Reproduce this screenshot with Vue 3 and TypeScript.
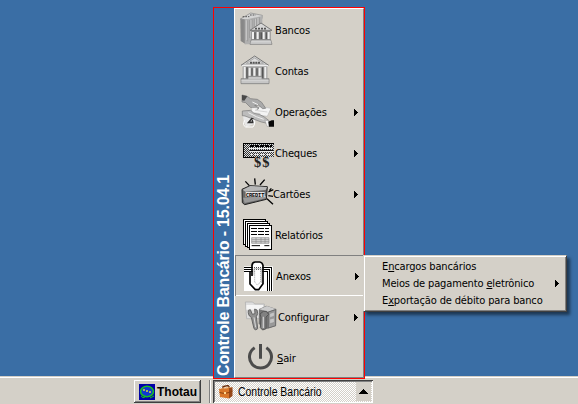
<script setup lang="ts">
interface MenuItem {
  id: string
  label: string
  key?: string
  rest?: string
  arrow?: boolean
  box: string
}

const items: MenuItem[] = [
  { id: 'bancos', label: 'Bancos', box: '102 27 102 123' },
  { id: 'contas', label: 'Contas', box: '102 150 102 123' },
  { id: 'operacoes', label: 'Operações', arrow: true, box: '102 9 102 123' },
  { id: 'cheques', label: 'Cheques', arrow: true, box: '102 132 102 123' },
  { id: 'cartoes', label: 'Cartões', arrow: true, box: '102 9 102 123' },
  { id: 'relatorios', label: 'Relatórios', box: '102 132 102 123' },
  { id: 'anexos', label: 'Anexos', arrow: true, box: '102 15 102 123' },
  { id: 'configurar', label: 'Confi', key: 'g', rest: 'urar', arrow: true, box: '102 138 102 123' },
  { id: 'sair', label: '', key: 'S', rest: 'air', box: '102 36 102 123' },
]

const subItems = [
  { id: 'encargos', label: 'E', key: 'n', rest: 'cargos bancários', arrow: false },
  { id: 'meios', label: 'Meios de pagamento ', key: 'e', rest: 'letrônico', arrow: true },
  { id: 'exportacao', label: 'E', key: 'x', rest: 'portação de débito para banco', arrow: false },
]
</script>

<template>
  <div class="desktop">
    <div class="taskbar">
      <button class="task raised">
        <svg class="task-icon" width="16" height="16" viewBox="0 0 16 16">
          <rect width="16" height="16" fill="#0000a8" />
          <ellipse cx="8" cy="7.5" rx="6.4" ry="5.2" fill="#1038d0" stroke="#18c020" stroke-width="1.6" />
          <path d="M4 6h2M7 7h2M10 8h2" stroke="#d8d840" stroke-width="1.3" />
          <path d="M2 12q2 3 4 1M11 14l4-2" stroke="#18c020" fill="none" />
        </svg>
        <span class="task-label bold">Thotau</span>
      </button>
      <i class="divider"></i>
      <button class="task pressed">
        <svg class="task-icon" width="14" height="14" viewBox="0 0 14 14">
          <path d="M4 4V1.5L9 .5l1 1V4" fill="none" stroke="#6b2c08" stroke-width="1.3" />
          <path d="M0 4l10-1v10.5L1 12z" fill="#d9772a" />
          <path d="M10 3l3.5-1v9L10 13.500z" fill="#97481a" />
          <path d="M0 4l10-1 3.500-1-9 .8z" fill="#f0a050" />
          <path d="M.5 7.500q5 2 9.500 0l3.500-1.500" fill="none" stroke="#8d430f" />
          <path d="M5 7h2v2H5z" fill="#ffd890" />
        </svg>
        <span class="task-label narrow">Controle Bancário</span>
        <span class="up"><svg width="9" height="5" viewBox="0 0 9 5" shape-rendering="crispEdges"><path d="M4 0h1v1h1v1h1v1h1v1h1v1H0V4h1V3h1V2h1V1h1z" /></svg></span>
      </button>
    </div>

    <div class="popup">
      <div class="brand"><span class="brand-text">Controle Bancário - 15.04.1</span></div>
      <div class="menu">
        <div v-for="item in items" :key="item.id" class="item" :class="item.id">
          <svg class="icon" width="34" height="41" :viewBox="item.box">
            <template v-if="item.id === 'bancos'">
              <path d="M106 57L123 51V133L107 123z" fill="#858585" />
              <path d="M106 57L137 39 172 46 171 56 123 60z" fill="#d4d4d4" stroke="#858585" stroke-width="2" />
              <path d="M119 59L172 48V133H119z" fill="#b0b0b0" />
              <path d="M111 58V123M116 57V127M128 61V124M134 60V114M141 58V110M148 56V94M155 55V88M163 52V83" stroke="#8e8e8e" stroke-width="2" />
              <path d="M125 61V120M138 60V110M151 57V90M159 54V85" stroke="#d6d6d6" stroke-width="2" />
              <path d="M113 50h20M135 45h17" stroke="#555" stroke-width="3" stroke-dasharray="5 3" />
              <path d="M139 93h58v28h-58z" fill="#8d8d8d" />
              <path d="M135 91L168 69 201 91z" fill="#d7d7d7" stroke="#777" stroke-width="3" />
              <path d="M150 86h35" stroke="#555" stroke-width="5" stroke-dasharray="6 3" />
              <path d="M144 96v22M158 96v22M176 96v22M191 96v22" stroke="#f0f0f0" stroke-width="6" />
              <path d="M150 97v20M165 97v20M170 97v20M184 97v20" stroke="#4e4e4e" stroke-width="3" />
              <path d="M139 119h58l4 14h-66z" fill="#bcbcbc" stroke="#777" stroke-width="2" />
              <path d="M138 124h60M136 129h63" stroke="#e5e5e5" stroke-width="2" />
            </template>
            <template v-else-if="item.id === 'contas'">
              <path d="M113 198h74v43h-74z" fill="#999" />
              <path d="M108 196L149 168 191 196z" fill="#d4d4d4" stroke="#777" stroke-width="3" />
              <path d="M124 190L149 174 175 190z" fill="#ddd" stroke="#999" stroke-width="2" />
              <path d="M135 188h31" stroke="#555" stroke-width="6" stroke-dasharray="6 2" />
              <path d="M110 197h80" stroke="#ededed" stroke-width="4" />
              <path d="M119 201v38M134 203v26M148 203v26M164 203v26M181 201v38" stroke="#efefef" stroke-width="6" />
              <path d="M126 202v32M141 205v22M156 205v22M173 202v32" stroke="#555" stroke-width="4" />
              <path d="M129 229h42v11h-42z" fill="#b4b4b4" />
              <path d="M108 236h21v-7h42v7h21v15h-84z" fill="#b6b6b6" stroke="#777" stroke-width="2" />
              <path d="M109 241h82M109 246h82M131 234h38" stroke="#e8e8e8" stroke-width="2" />
            </template>
            <template v-else-if="item.id === 'operacoes'">
              <path d="M114 82L150 78 151 106 123 118 116 100z" fill="#e7e7e7" />
              <path d="M144 52L198 61 187 85 136 78z" fill="#f4f4f4" stroke="#bbb" stroke-width="2" />
              <path d="M150 67l37 5M146 74l20 3" stroke="#c6c6c6" stroke-width="2" />
              <path d="M111 21L125 24 137 32 157 34 170 43 182 61 173 62 160 51 149 53 162 59 159 64 136 58 122 44 111 42z" fill="#aaa" stroke="#777" stroke-width="2" />
              <path d="M111 21l16 4-9 13-7-1z" fill="#484848" />
              <path d="M112 69L137 67 147 76 163 79 178 87 192 98 188 106 169 102 153 96 136 90 120 84 112 83z" fill="#bcbcbc" stroke="#777" stroke-width="2" />
              <path d="M130 74l24 12 22 8M140 61l17 1M142 42l17 8" stroke="#eee" stroke-width="3" fill="none" />
              <path d="M142 90L131 103h12M143 90v16" fill="none" stroke="#333" stroke-width="5" />
              <path d="M119 97q-8 14 3 20h22q10-12-1-24" fill="none" stroke="#fff" stroke-width="3" />
              <path d="M180 97l11 1 2 17h-7z" fill="#f7f7f7" stroke="#777" />
              <path d="M190 101l10-4h7v19h-15z" fill="#080808" />
            </template>
            <template v-else-if="item.id === 'cheques'">
              <defs><pattern id="dither" width="6" height="6" patternUnits="userSpaceOnUse"><path d="M0 0h3v3H0zM3 3h3v3H3z" fill="#333" /></pattern></defs>
              <g shape-rendering="crispEdges">
                <rect x="117" y="168" width="90" height="39" fill="#ddd" />
                <rect x="117" y="168" width="90" height="39" fill="url(#dither)" />
                <path d="M207 166.500H115.500V208H150" fill="none" stroke="#000" stroke-width="3" />
                <path d="M135 172.500h66" stroke="#000" stroke-width="6" stroke-dasharray="12 3" />
                <path d="M132 181.500h72M135 190.500h69" stroke="#eee" stroke-width="3" />
                <path d="M135 186h69" stroke="#111" stroke-width="3" />
                <path d="M138 199.500h66" stroke="#eee" stroke-width="3" stroke-dasharray="6 3" />
              </g>
              <text x="147" y="236" class="dollars" textLength="46">$$</text>
            </template>
            <template v-else-if="item.id === 'cartoes'">
              <path d="M111 58L135 47 187 50 184 88 119 104 112 98z" fill="#686868" stroke="#222" stroke-width="3" />
              <path d="M113 59L136 48 186 51 182 60 121 65z" fill="#b8b8b8" />
              <path d="M114 83L183 78 182 85 119 99z" fill="#999" />
              <path d="M122 66h57v15h-57z" fill="#e4e4e4" />
              <text x="123" y="80" class="credit" textLength="55">CREDIT</text>
              <path d="M121 34l12 13M149 25l2 19M179 29l-14 16M190 66l15-7M190 77l14 2M186 86l18 17M193 62l6-7" stroke="#050505" stroke-width="4" fill="none" />
            </template>
            <template v-else-if="item.id === 'relatorios'">
              <g fill="#fff" stroke="#000" stroke-width="3" shape-rendering="crispEdges">
                <path d="M115.500 148.500h66v74h-66z" /><path d="M121.500 154.500h66v74h-66z" />
                <path d="M127.500 160.500h66v73h-66z" /><path d="M133.500 166.500h66v71h-66z" />
                <path d="M139 174h54M139 184h54M139 193h54" stroke-dasharray="18 3" />
              </g>
              <path d="M140 203h52v17h-52zM140 209h52M140 215h52M153 203v17M168 203v17M180 203v17" fill="#d6d6d6" stroke="#888" stroke-width="2" />
              <path d="M140 227h25M178 227h15" stroke="#000" stroke-width="3" />
            </template>
            <template v-else-if="item.id === 'anexos'">
              <path d="M117 49h87v74h-87z" fill="#fff" />
              <g fill="none" stroke="#000" stroke-width="3" shape-rendering="crispEdges">
                <path d="M117 52.500h81.500v70.500M117 58.500h75.500v64.500M117 64.500h69.500v58.500" />
              </g>
              <path d="M141 78V46q1-10 10-10h13q8 1 10 10V101L161 119h-10L135 102V63" fill="#fff" stroke="#000" stroke-width="5" />
              <path d="M141 52.500h33M141 58.500h33M141 64.500h33" stroke="#000" stroke-width="2" stroke-dasharray="3 3" />
              <path d="M149 62V96l8 9 10-9V62" fill="#fff" stroke="#777" stroke-width="2" stroke-dasharray="3 3" />
              <path d="M147 76V56h22v43" fill="none" stroke="#bbb" stroke-width="3" />
            </template>
            <template v-else-if="item.id === 'configurar'">
              <path d="M121 156h22l6 6h29v44h-53z" fill="#ddd" stroke="#aaa" stroke-width="2" />
              <path d="M124 165h50v14h-50z" fill="#f5f5f5" />
              <path d="M162 177L185 167 214 177 213 228 185 237 161 222z" fill="#777" />
              <path d="M163 178l23-10 26 9-23 8z" fill="#ccc" />
              <path d="M190 186l22-7v48l-22 7z" fill="#999" stroke="#5c5c5c" stroke-width="2" />
              <path d="M194 191l14-5v12l-14 5zM194 208l14-4v13l-14 4z" fill="#c5c5c5" stroke="#777" />
              <path d="M130 181q-2 16 9 21l8 34q5 7 11 0l-4-36q7-9 2-20l-7-3 1 14-8 2-6-14z" fill="#909090" stroke="#666" stroke-width="3" />
              <path d="M147 202l5 30" stroke="#d8d8d8" stroke-width="3" />
              <path d="M165 192l10-8h9l7 9-8 8v35l-10 4-7-7 2-31z" fill="#818181" stroke="#555" stroke-width="3" />
              <path d="M175 200v34" stroke="#ccc" stroke-width="4" />
            </template>
            <template v-else>
              <path d="M149 68a33 33 0 1 0 35 0M166.500 57V101" fill="none" stroke="#4b4b4b" stroke-width="9" />
            </template>
          </svg>
          <span class="label">{{ item.label }}<u v-if="item.key">{{ item.key }}</u>{{ item.rest }}</span>
          <svg v-if="item.arrow" class="arrow" width="4" height="7" viewBox="0 0 4 7" shape-rendering="crispEdges"><path d="M0 0h1v1h1v1h1v1h1v1H3v1H2v1H1v1H0z" /></svg>
        </div>
      </div>
    </div>

    <div class="submenu">
      <div v-for="sub in subItems" :key="sub.id" class="sub" :class="sub.id">
        <span class="label">{{ sub.label }}<u>{{ sub.key }}</u>{{ sub.rest }}</span>
        <svg v-if="sub.arrow" class="arrow" width="4" height="7" viewBox="0 0 4 7" shape-rendering="crispEdges"><path d="M0 0h1v1h1v1h1v1h1v1H3v1H2v1H1v1H0z" /></svg>
      </div>
    </div>
  </div>
</template>

<style>
body { margin: 0; overflow: hidden; }
</style>

<style scoped>
.desktop {
  position: relative;
  display: flex;
  flex-direction: column;
  justify-content: flex-end;
  width: 578px;
  height: 404px;
  background: #3a6ea5;
  overflow: hidden;
  font-family: "DejaVu Sans Condensed", "DejaVu Sans", sans-serif;
  font-stretch: condensed;
  font-size: 11px;
  letter-spacing: -0.14px;
  color: #000;
}
.taskbar {
  display: flex;
  box-sizing: border-box;
  height: 28px;
  padding: 3px 0 0 134px;
  background: #d4d0c8;
  border-top: 1px solid #d4d0c8;
  box-shadow: inset 0 1px #fff;
}
.task {
  display: flex;
  align-items: center;
  box-sizing: border-box;
  height: 23px;
  margin: 0;
  border: 0;
  background: #d4d0c8;
  font: 12px "Liberation Sans", Arial, sans-serif;
  letter-spacing: 0;
  color: #000;
}
.raised {
  width: 67px;
  padding: 0 0 0 5px;
  gap: 2px;
  box-shadow: inset -1px -1px #404040, inset 1px 1px #fff, inset -2px -2px #808080;
}
.pressed {
  width: 160px;
  padding: 0 2px 0 6px;
  gap: 5px;
  background: repeating-conic-gradient(#fff 0 25%, #d4d0c8 0 50%) 0 0 / 2px 2px;
  box-shadow: inset 1px 1px #404040, inset -1px -1px #fff, inset 2px 2px #808080;
}
.divider {
  width: 1px;
  height: 23px;
  margin: 0 3px 0 8px;
  background: #808080;
  box-shadow: 1px 0 #fff;
}
.task-label { white-space: nowrap; }
.narrow {
  width: 96px;
  margin-right: -14px;
  transform: scaleX(0.87);
  transform-origin: left;
}
.bold { font-weight: bold; }
.task-icon { flex: none; }
.up {
  display: flex;
  align-items: center;
  justify-content: center;
  width: 15px;
  height: 19px;
  margin-left: auto;
  background: #d4d0c8;
}
.popup {
  position: absolute;
  left: 213px;
  top: 7px;
  display: flex;
  box-sizing: border-box;
  width: 152px;
  height: 372px;
  border: 1px solid #f00;
  background: #3a6ea5;
}
.brand {
  display: flex;
  align-items: center;
  width: 20px;
  padding-bottom: 2px;
}
.brand-text {
  writing-mode: vertical-rl;
  transform: rotate(180deg);
  align-self: flex-end;
  font: bold 16px/20px "Liberation Sans", Arial, sans-serif;
  letter-spacing: -0.2px;
  color: #fff;
  white-space: nowrap;
}
.menu {
  box-sizing: border-box;
  width: 130px;
  border: 1px solid;
  border-color: #fff #808080 #808080 #fff;
  background: #d4d0c8;
}
.item {
  display: flex;
  align-items: center;
  box-sizing: border-box;
  height: 41px;
  padding: 0 5px 0 4px;
}
.item:last-child { height: 40px; align-items: flex-start; }
.sair .label { line-height: 41px; }
.icon { flex: none; overflow: visible; }
.label { padding-left: 2px; white-space: pre; }
.item .label { padding-top: 2px; }
.item.sair .label { padding-top: 1px; }
.label u { text-underline-offset: 1px; }
.arrow { flex: none; margin-left: auto; }
.item .arrow { margin-top: 2px; }
.cartoes .label { padding-left: 0; }
.anexos { box-shadow: inset 0 1px #808080, inset 1px 0 #808080, inset 0 -1px #fff; }
.anexos .label { padding-left: 3px; }
.anexos .arrow { margin-right: -1px; }
.configurar .label { padding-left: 5px; }
.sair .label { padding-left: 4px; }
.dollars { font: bold 43px "Liberation Serif", serif; letter-spacing: 0; fill: #222; }
.credit { font: bold 16px "Liberation Mono", monospace; letter-spacing: 0; }
.submenu {
  position: absolute;
  left: 363px;
  top: 255px;
  box-sizing: border-box;
  width: 204px;
  height: 57px;
  padding: 2px 1px 0;
  border: 1px solid;
  border-color: #d4d0c8 #404040 #404040 #d4d0c8;
  background: #d4d0c8;
  box-shadow: inset 1px 1px #fff, inset -1px -1px #808080, 3px 3px 3px rgba(0, 0, 0, 0.5);
}
.sub {
  display: flex;
  align-items: center;
  box-sizing: border-box;
  height: 17px;
  padding: 0 6px 0 15px;
}
</style>
